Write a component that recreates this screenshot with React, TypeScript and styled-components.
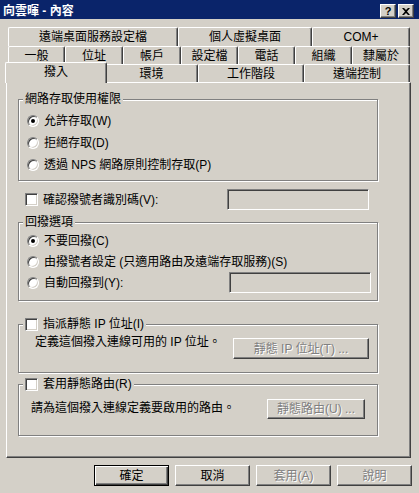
import React from "react";
import styled, { createGlobalStyle } from "styled-components";

const GlobalStyle = createGlobalStyle`
  html, body {
    margin: 0;
    padding: 0;
    background: #d4d0c8;
  }
  body {
    font-family: "Liberation Sans", "Noto Sans CJK TC", sans-serif;
    font-size: 12px;
    line-height: 14px;
    color: #000;
  }
  * {
    box-sizing: border-box;
  }
`;

const Window = styled.div`
  width: 419px;
  height: 493px;
  background: #d4d0c8;
  display: flex;
  flex-direction: column;
  overflow: hidden;
`;

const TitleBar = styled.div`
  height: 19px;
  flex-shrink: 0;
  background: #0a246a;
  color: #fff;
  font-weight: bold;
  display: flex;
  align-items: flex-start;
  padding: 4px 5px 0 3px;
`;

const TitleText = styled.div`
  flex: 1;
  line-height: 14px;
`;

const TitleButton = styled.div<{ $gap?: number }>`
  width: 16px;
  height: 14px;
  margin-left: ${(p) => p.$gap ?? 0}px;
  background: #d4d0c8;
  border-top: 1px solid #fff;
  border-left: 1px solid #fff;
  border-right: 1px solid #404040;
  border-bottom: 1px solid #404040;
  box-shadow: inset -1px -1px 0 #808080;
  display: flex;
  align-items: center;
  justify-content: center;
  color: #000;
  font-family: "Liberation Sans", sans-serif;
  font-size: 11px;
  font-weight: bold;
  line-height: 1;
`;

const TabArea = styled.div`
  padding-top: 8px;
  display: flex;
  flex-direction: column;
`;

const TabRow = styled.div<{ $h: number; $pl: number }>`
  display: flex;
  height: ${(p) => p.$h}px;
  padding-left: ${(p) => p.$pl}px;
`;

const Tab = styled.div<{ $w: number; $active?: boolean }>`
  width: ${(p) => p.$w + (p.$active ? 4 : 0)}px;
  height: ${(p) => (p.$active ? "21px" : "100%")};
  margin: ${(p) => (p.$active ? "-2px -2px 0 -2px" : "0")};
  position: relative;
  z-index: ${(p) => (p.$active ? 2 : 1)};
  background: #d4d0c8;
  border-top: 1px solid #fff;
  border-left: 1px solid #fff;
  border-right: 1px solid #404040;
  border-top-left-radius: 2px;
  border-top-right-radius: 2px;
  box-shadow: inset -1px 0 0 #808080;
  display: flex;
  align-items: ${(p) => (p.$active ? "flex-start" : "center")};
  padding-top: ${(p) => (p.$active ? "2px" : "0")};
  justify-content: center;
  white-space: nowrap;
`;

const Panel = styled.div`
  margin: 0 8px 0 6px;
  height: 376px;
  flex-shrink: 0;
  border-top: 1px solid #fff;
  border-left: 1px solid #fff;
  border-right: 1px solid #404040;
  border-bottom: 1px solid #404040;
  box-shadow: inset -1px -1px 0 #808080;
  padding-left: 11px;
  display: flex;
  flex-direction: column;
`;

const Group = styled.div<{ $h: number; $mt: number; $pt: number }>`
  position: relative;
  width: 360px;
  height: ${(p) => p.$h}px;
  margin-top: ${(p) => p.$mt}px;
  padding-top: ${(p) => p.$pt}px;
  border: 1px solid #808080;
  box-shadow: inset 1px 1px 0 #fff, 1px 1px 0 #fff;
  flex-shrink: 0;
`;

const Legend = styled.div`
  position: absolute;
  top: -8px;
  left: 4px;
  height: 14px;
  padding: 0 2px;
  background: #d4d0c8;
  display: flex;
  align-items: center;
  gap: 5px;
  white-space: nowrap;
`;

const OptionRow = styled.div<{ $h: number }>`
  display: flex;
  align-items: center;
  height: ${(p) => p.$h}px;
  padding-left: 8px;
  gap: 5px;
  white-space: nowrap;
`;

const CheckRow = styled.div`
  display: flex;
  align-items: center;
  width: 360px;
  height: 21px;
  margin-top: 8px;
  padding-left: 7px;
  gap: 5px;
  white-space: nowrap;
`;

const InfoRow = styled.div<{ $pl: number }>`
  display: flex;
  align-items: flex-start;
  padding-left: ${(p) => p.$pl}px;
  white-space: nowrap;
`;

const InfoText = styled.div<{ $mt: number }>`
  margin-top: ${(p) => p.$mt}px;
`;

const RadioCircle = styled.div`
  width: 12px;
  height: 12px;
  flex-shrink: 0;
  border-radius: 50%;
  background: #fff;
  border: 1px solid;
  border-color: #808080 #fff #fff #808080;
  box-shadow: inset 1px 1px 0 #404040, inset -1px -1px 0 #d4d0c8;
  display: flex;
  align-items: center;
  justify-content: center;
`;

const RadioDot = styled.div`
  width: 4px;
  height: 4px;
  border-radius: 50%;
  background: #000;
`;

const CheckBox = styled.div`
  width: 13px;
  height: 13px;
  flex-shrink: 0;
  background: #fff;
  border-top: 1px solid #808080;
  border-left: 1px solid #808080;
  border-right: 1px solid #fff;
  border-bottom: 1px solid #fff;
  box-shadow: inset 1px 1px 0 #404040, inset -1px -1px 0 #d4d0c8;
`;

const TextBox = styled.div<{ $mr: number }>`
  width: 142px;
  height: 21px;
  margin-left: auto;
  margin-right: ${(p) => p.$mr}px;
  background: #d4d0c8;
  border-top: 1px solid #808080;
  border-left: 1px solid #808080;
  border-right: 1px solid #fff;
  border-bottom: 1px solid #fff;
  box-shadow: inset 1px 1px 0 #404040, inset -1px -1px 0 #d4d0c8;
`;

const Button = styled.div<{
  $w: number;
  $h?: number;
  $disabled?: boolean;
  $default?: boolean;
}>`
  width: ${(p) => p.$w}px;
  height: ${(p) => p.$h ?? 21}px;
  flex-shrink: 0;
  background: #d4d0c8;
  display: flex;
  align-items: center;
  justify-content: center;
  white-space: nowrap;
  color: ${(p) => (p.$disabled ? "#808080" : "#000")};
  text-shadow: ${(p) => (p.$disabled ? "1px 1px 0 #fff" : "none")};
  ${(p) =>
    p.$default
      ? `
    border: 1px solid #000;
    box-shadow: inset 1px 1px 0 #fff, inset -1px -1px 0 #404040, inset -2px -2px 0 #808080;
  `
      : `
    border-top: 1px solid #fff;
    border-left: 1px solid #fff;
    border-right: 1px solid #404040;
    border-bottom: 1px solid #404040;
    box-shadow: inset -1px -1px 0 #808080;
  `}
`;

const GroupButton = styled(Button)<{ $mt: number; $mr: number }>`
  margin-top: ${(p) => p.$mt}px;
  margin-left: auto;
  margin-right: ${(p) => p.$mr}px;
`;

const ButtonBar = styled.div`
  display: flex;
  justify-content: flex-end;
  gap: 6px;
  margin-top: 7px;
  padding-right: 7px;
`;

const Radio = ({ checked }: { checked?: boolean }) => (
  <RadioCircle>{checked && <RadioDot />}</RadioCircle>
);

const tabRows: { h: number; pl: number; tabs: [string, number][] }[] = [
  {
    h: 19,
    pl: 8,
    tabs: [
      ["遠端桌面服務設定檔", 170],
      ["個人虛擬桌面", 134],
      ["COM+", 98],
    ],
  },
  {
    h: 18,
    pl: 8,
    tabs: [
      ["一般", 57],
      ["位址", 58],
      ["帳戶", 58],
      ["設定檔", 57],
      ["電話", 57],
      ["組織", 57],
      ["隸屬於", 58],
    ],
  },
];

const lastRow: [string, number][] = [
  ["撥入", 98],
  ["環境", 93],
  ["工作階段", 106],
  ["遠端控制", 106],
];

export default function App() {
  return (
    <Window>
      <GlobalStyle />
      <TitleBar>
        <TitleText>向雲暉 - 內容</TitleText>
        <TitleButton>?</TitleButton>
        <TitleButton $gap={2}>
          <svg width="8" height="7" viewBox="0 0 8 7">
            <path
              d="M0 0h2l2 2 2-2h2L5 3.5 8 7H6L4 5 2 7H0l3-3.5z"
              fill="#000"
            />
          </svg>
        </TitleButton>
      </TitleBar>

      <TabArea>
        {tabRows.map((row, i) => (
          <TabRow key={i} $h={row.h} $pl={row.pl}>
            {row.tabs.map(([label, w]) => (
              <Tab key={label} $w={w}>
                {label}
              </Tab>
            ))}
          </TabRow>
        ))}
        <TabRow $h={18} $pl={7}>
          {lastRow.map(([label, w], i) => (
            <Tab key={label} $w={w} $active={i === 0}>
              {label}
            </Tab>
          ))}
        </TabRow>
      </TabArea>

      <Panel>
        <Group $h={82} $mt={16} $pt={10}>
          <Legend>網路存取使用權限</Legend>
          <OptionRow $h={22}>
            <Radio checked />
            允許存取(W)
          </OptionRow>
          <OptionRow $h={22}>
            <Radio />
            拒絕存取(D)
          </OptionRow>
          <OptionRow $h={22}>
            <Radio />
            透過 NPS 網路原則控制存取(P)
          </OptionRow>
        </Group>

        <CheckRow>
          <CheckBox />
          確認撥號者識別碼(V):
          <TextBox $mr={9} />
        </CheckRow>

        <Group $h={79} $mt={12} $pt={7}>
          <Legend>回撥選項</Legend>
          <OptionRow $h={21}>
            <Radio checked />
            不要回撥(C)
          </OptionRow>
          <OptionRow $h={21}>
            <Radio />
            由撥號者設定 (只適用路由及遠端存取服務)(S)
          </OptionRow>
          <OptionRow $h={21}>
            <Radio />
            自動回撥到(Y):
            <TextBox $mr={6} />
          </OptionRow>
        </Group>

        <Group $h={49} $mt={23} $pt={10}>
          <Legend>
            <CheckBox />
            指派靜態 IP 位址(I)
          </Legend>
          <InfoRow $pl={16}>
            <InfoText $mt={0}>定義這個撥入連線可用的 IP 位址。</InfoText>
            <GroupButton $w={136} $h={21} $mt={3} $mr={8} $disabled>
              靜態 IP 位址(T) ...
            </GroupButton>
          </InfoRow>
        </Group>

        <Group $h={52} $mt={11} $pt={14}>
          <Legend>
            <CheckBox />
            套用靜態路由(R)
          </Legend>
          <InfoRow $pl={12}>
            <InfoText $mt={2}>請為這個撥入連線定義要啟用的路由。</InfoText>
            <GroupButton $w={98} $h={20} $mt={0} $mr={12} $disabled>
              靜態路由(U) ...
            </GroupButton>
          </InfoRow>
        </Group>
      </Panel>

      <ButtonBar>
        <Button $w={75} $default>
          確定
        </Button>
        <Button $w={75}>取消</Button>
        <Button $w={75} $disabled>
          套用(A)
        </Button>
        <Button $w={75} $disabled>
          說明
        </Button>
      </ButtonBar>
    </Window>
  );
}
